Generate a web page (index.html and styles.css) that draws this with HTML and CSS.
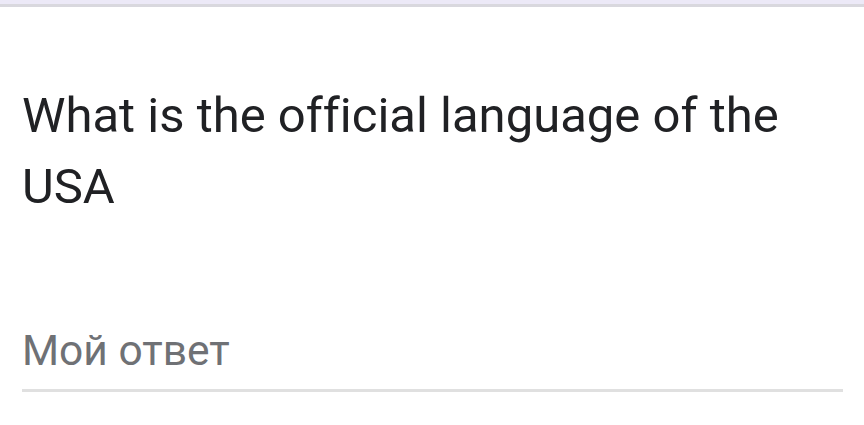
FILE: index.html
```html
<!DOCTYPE html>
<html>
<head>
<meta charset="utf-8">
<link rel="stylesheet" href="styles.css">
</head>
<body>
<div class="topbar"></div>
<div class="card">
  <div class="question">What is the official language of the USA</div>
  <div class="answer">
    <div class="placeholder">Мой ответ</div>
    <div class="underline"></div>
  </div>
</div>
</body>
</html>
```
FILE: styles.css
```css
html, body {
  margin: 0;
  padding: 0;
  background: #ffffff;
}
.topbar {
  height: 4px;
  background: #ece9f7;
  border-bottom: 3px solid #d9d8de;
}
.card {
  padding: 73px 22px 0 22px;
}
.question {
  font-family: Roboto, "Noto Sans", sans-serif;
  font-size: 49px;
  line-height: 71px;
  color: #202124;
  width: 800px;
  font-variant-ligatures: none;
}
.answer {
  margin-top: 104px;
}
.placeholder {
  font-family: Roboto, "Liberation Sans", sans-serif;
  font-size: 42.5px;
  color: #6f7175;
  line-height: 50px;
}
.underline {
  margin-top: 13px;
  height: 3px;
  width: 821px;
  background: #e0e0e0;
}
```
